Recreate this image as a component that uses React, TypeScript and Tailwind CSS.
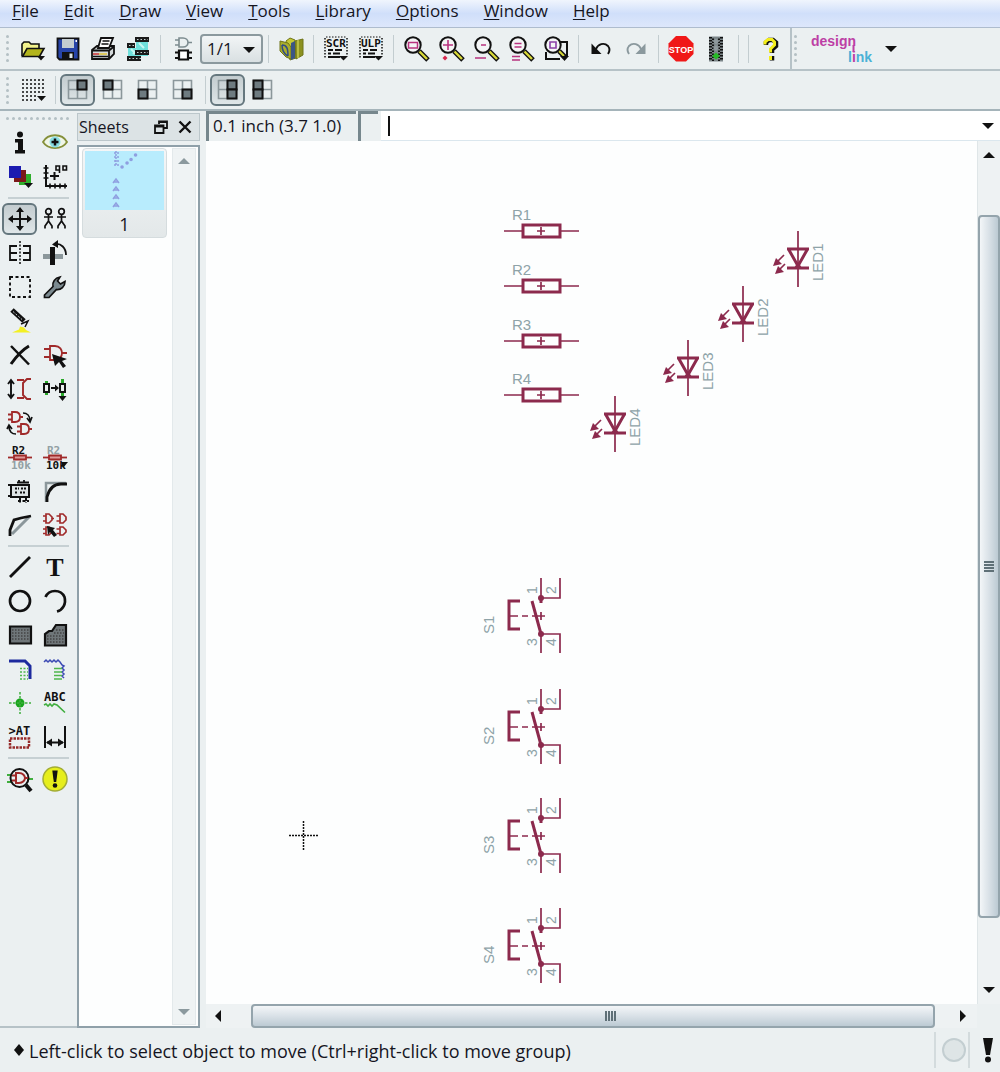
import { useState } from 'react';
import type { ReactNode } from 'react';
import clsx from 'clsx';

const MAROON = '#8c2a4d';
const LABEL = '#8ea3a8';

function Icon({ children, size = 26 }: { children: ReactNode; size?: number }) {
  return (
    <svg width={size} height={size} viewBox="0 0 26 26" fill="none" stroke="#111" strokeWidth="2" className="overflow-visible" aria-hidden="true">
      {children}
    </svg>
  );
}

function Glyphs({ x, y, size, fill = '#111', children }: { x: number; y: number; size: number; fill?: string; children: string }) {
  return (
    <text x={x} y={y} fontSize={size} fill={fill} stroke="none" fontFamily="'DejaVu Sans Mono', monospace" fontWeight="700">
      {children}
    </text>
  );
}

/* ---------- toolbar icons ---------- */

const OpenIcon = () => (
  <Icon>
    <path d="M2 20V8l2-2h5l2 2h8v4" fill="#f2f28c" strokeWidth="1.6" />
    <path d="M2.500 20.500L7 12.500h17l-4.500 8z" fill="#b3b51c" strokeWidth="1.600" />
    <path d="M17 20h8l-4 4.500z" fill="#111" stroke="none" />
  </Icon>
);

const SaveIcon = () => (
  <Icon>
    <path d="M2.500 2.500h21v21h-19l-2-2z" fill="#2744a8" strokeWidth="1.800" />
    <path d="M7 3h12v9H7z" fill="#c3ccd0" stroke="none" />
    <path d="M7 16h12v7H7z" fill="#111" stroke="none" />
    <path d="M14.500 17.500h3v4.500h-3z" fill="#dfe6e8" stroke="none" />
    <path d="M20.500 5h1.500" stroke="#fff" />
  </Icon>
);

const PrintIcon = () => (
  <Icon>
    <path d="M2 14l5-4h17v8l-5 5H2z" fill="#d5dadb" strokeWidth="1.800" />
    <path d="M8 12l3-10h12l-4 10z" fill="#fff" strokeWidth="1.800" />
    <path d="M12.500 5h7M11.500 8h7" strokeWidth="1.400" />
    <path d="M2 14.500h17l5-4M19 15v8" strokeWidth="1.800" />
    <path d="M3 18h6" stroke="#c33" strokeWidth="1.500" />
    <path d="M9 18h8" stroke="#e0c437" strokeWidth="1.500" />
    <path d="M3 20.500h15" strokeWidth="1.500" />
  </Icon>
);

const BoardIcon = () => (
  <Icon>
    <path d="M3 12h8V6h12v14H3z" fill="#6fe0dc" stroke="none" />
    <path d="M6 13l5 5M14 7l5 5M8 18l4-4" stroke="#c7f8f4" strokeWidth="2" />
    <path d="M10 1h14v5H10zM2 7h8v5H2zM10 14h14v5H10zM2 20h14v5H2z" fill="#1a1a1a" stroke="none" />
    <path d="M12 3.500h11M4 9.500h6M12 16.500h11M4 22.500h12" stroke="#c5d3d3" strokeWidth="1.200" strokeDasharray="1.500 2" />
  </Icon>
);

const GateChipIcon = () => (
  <Icon>
    <path d="M9 2h4c3 0 5 2 5 4.500s-2 4.500-5 4.500H9zM5 4h4M5 9h4M18 6.500h4" stroke="#7d8c90" strokeWidth="1.600" />
    <path d="M9 14.500h9v9H9z" strokeWidth="2.200" fill="#fff" />
    <path d="M5 16.500h4M5 22h4M18 16.500h4M18 22h4" strokeWidth="2" />
  </Icon>
);

const LibraryIcon = () => (
  <Icon>
    <path d="M8 5l4-3 5 2 1 18-6 2z" fill="#c5c934" stroke="#6f7418" strokeWidth="1" />
    <path d="M17 5l8-2v16l-7 4z" fill="#8c9120" stroke="#6f7418" strokeWidth="1" />
    <path d="M2 5l8 2 3 4v12l-5-2-6-6z" fill="#a9ad2c" stroke="#6f7418" strokeWidth="1" />
    <path d="M13 7l4-2v17l-4 2z" fill="#3c5684" stroke="none" />
    <path d="M4 9c5 0 6 4 6 11M4 9c0 5 2 9 6 11" stroke="#304b85" strokeWidth="1.500" />
    <path d="M20 4v18" stroke="#d9dc5a" strokeWidth="1.200" />
  </Icon>
);

function ScriptIcon({ label }: { label: string }) {
  return (
    <Icon>
      <path d="M2 2v20M24 2v17" strokeDasharray="1.500 1.500" strokeWidth="1.500" />
      <path d="M3 1h20" strokeDasharray="1.500 1.500" strokeWidth="1" />
      <Glyphs x={3} y={11} size={11}>{label}</Glyphs>
      <path d="M5 14h5M12 14h7M5 17.500h3M10 17.500h7M5 21h12" strokeWidth="1.800" />
      <path d="M16 20h9l-4.500 4.500z" fill="#111" stroke="none" />
    </Icon>
  );
}

function Magnifier({ children }: { children: ReactNode }) {
  return (
    <Icon>
      <path d="M16 15l9 9" strokeWidth="5" />
      <path d="M16.500 15.500l7.500 7.500" stroke="#d8d838" strokeWidth="2.400" />
      <circle cx="10" cy="9" r="7.700" fill="#f4f5f6" strokeWidth="2" />
      {children}
    </Icon>
  );
}

const ZoomFitIcon = () => (
  <Magnifier>
    <path d="M5.500 6.500h9v5.500h-9z" stroke="#b8337f" strokeWidth="1.500" />
  </Magnifier>
);
const ZoomInIcon = () => (
  <Magnifier>
    <path d="M5 9h10M10 4v10" stroke="#b8337f" strokeWidth="1.600" />
    <path d="M7 19.500l2.500 2.500L7 24.500 4.500 22z" fill="#d8274f" stroke="none" />
  </Magnifier>
);
const ZoomOutIcon = () => (
  <Magnifier>
    <path d="M8 9h5M2 22h11" stroke="#b8337f" strokeWidth="1.600" />
  </Magnifier>
);
const ZoomRedrawIcon = () => (
  <Magnifier>
    <path d="M6.500 7.500h7M6.500 11h7M4 20.500h8M4 24h8" stroke="#b8337f" strokeWidth="1.500" />
  </Magnifier>
);
const ZoomSelectIcon = () => (
  <Icon>
    <path d="M17 6h7v14M3 16v7h14" strokeWidth="2" />
    <path d="M16 15l6 6" strokeWidth="5" />
    <path d="M16 15l5 5" stroke="#d8d838" strokeWidth="2" />
    <circle cx="10" cy="9" r="7.700" fill="#f4f5f6" />
    <path d="M7 6h6v6H7z" stroke="#8a3fa8" strokeWidth="1.600" />
    <path d="M17 20h9l-4.500 5z" fill="#111" stroke="none" />
  </Icon>
);

const UndoIcon = ({ color = '#111', flip = false }: { color?: string; flip?: boolean }) => (
  <Icon>
    <g transform={flip ? 'translate(26 0) scale(-1 1)' : undefined}>
      <path d="M8 13c2-5 8-7 12-3 2 2.500 2 5 0 8" stroke={color} strokeWidth="1.900" />
      <path d="M3.500 7.500v10.500h10z" fill={color} stroke="none" />
    </g>
  </Icon>
);

const StopIcon = () => (
  <Icon>
    <path d="M8 0h10l7.500 7.500v10.500L18 25.500H8L.5 18V7.500z" fill="#f01818" stroke="none" />
    <text x="13" y="16.500" fontSize="9" fontWeight="700" textAnchor="middle" fill="#fff" stroke="none" fontFamily="'Liberation Sans', sans-serif">
      STOP
    </text>
  </Icon>
);

const GoIcon = () => (
  <Icon>
    <path d="M6 .5h14v25H6z" fill="#7b8588" stroke="none" />
    <path d="M7.500 1v24M18.500 1v24" strokeDasharray="1.500 1.500" strokeWidth="3" />
    <path d="M10 1v24M16 1v24" strokeDasharray="1.500 1.500" strokeDashoffset="1.500" strokeWidth="2" />
    <path d="M13 2.500l3 3-3 3-3-3zM13 9l3 3-3 3-3-3z" fill="#8f9a9e" stroke="none" />
    <path d="M13 16.500l4 3.500-4 3.500-4-3.500z" fill="#28b828" stroke="none" />
  </Icon>
);

const HelpIcon = () => (
  <Icon>
    <path d="M8 9V6.500l3-2.500h4l3 2.500v3.500l-4 3.500v3.500M14 20v4.500" stroke="#111" strokeWidth="4.500" />
    <path d="M7 8.500V6L10 3.500h4l2.500 2.500v3l-4 4v3.500M12.500 20v4" stroke="#f4ee1c" strokeWidth="3" />
  </Icon>
);

const GridIcon = () => (
  <Icon>
    <path d="M2 3h22M2 7h22M2 11h22M2 15h22M2 19h15M2 23h15" strokeDasharray="2 2" strokeWidth="1.600" />
    <path d="M17 19h9l-4.500 5z" fill="#111" stroke="none" />
  </Icon>
);

function PaneIcon({ cells }: { cells: [number, number][] }) {
  return (
    <Icon>
      <path d="M3.500 3.500h18v18h-18zM12.500 3.500v18M3.500 12.500h18" stroke="#8b979b" strokeWidth="1.600" />
      {cells.map(([cx, cy]) => (
        <rect key={`${cx}${cy}`} x={3.500 + cx * 9} y={3.500 + cy * 9} width="9" height="9" fill="#6e7b80" strokeWidth="2" />
      ))}
    </Icon>
  );
}

/* ---------- palette icons ---------- */

const InfoIcon = () => (
  <Icon>
    <circle cx="13" cy="4.500" r="3" fill="#111" stroke="none" />
    <path d="M8 9h8v11h2v3.500H8V20h3v-7.500H8z" fill="#111" stroke="none" />
  </Icon>
);
const EyeIcon = () => (
  <Icon>
    <path d="M1 12C6 3 20 3 25 12 20 20 6 20 1 12z" stroke="#85903a" strokeWidth="1.800" fill="#f0f6e8" />
    <circle cx="13" cy="12" r="5.500" fill="#8adfe4" stroke="none" />
    <path d="M13 8.500v7M9.500 12h7" strokeWidth="2.500" />
  </Icon>
);
const LayersIcon = () => (
  <Icon>
    <path d="M12 10h12v11H12z" fill="#2fae2c" stroke="none" />
    <path d="M7 6h12v12H7z" fill="#7a1919" stroke="none" />
    <path d="M2 2h12v12H2z" fill="#1b1bb0" stroke="none" />
    <path d="M17 19h9l-4.500 5z" fill="#111" stroke="none" />
  </Icon>
);
const MarkIcon = () => (
  <Icon>
    <path d="M4 1v21h21" strokeWidth="2" />
    <path d="M1.500 4h5M1.500 9h5M1.500 14h5M8 19.500v5M13 19.500v5M18 19.500v5M23 19.500v5" strokeWidth="1.600" />
    <path d="M8 12h9M12.500 8v8" />
    <path d="M14 2h3.500v4H14zM17.500 2v7M21 2h3.500v4H21z" strokeWidth="1.600" />
  </Icon>
);
const MoveIcon = () => (
  <Icon>
    <path d="M13 4v18M4 13h18" />
    <path d="M13 1l4 5H9zM13 25l4-5H9zM1 13l5-4v8zM25 13l-5-4v8z" fill="#111" stroke="none" />
  </Icon>
);
const CopyIcon = () => (
  <Icon>
    {[6.500, 19.500].map((x) => (
      <g key={x} strokeWidth="1.700">
        <circle cx={x} cy="5.500" r="2.800" />
        <path d={`M${x} 8.500v7.500M${x - 4.500} 11h9M${x} 15l-3.500 5v2.500M${x} 15l3.500 5v2.500`} />
      </g>
    ))}
  </Icon>
);
const MirrorIcon = () => (
  <Icon>
    <path d="M13 1v24" strokeDasharray="2 1.500" strokeWidth="1.500" />
    <path d="M10 6H3v14h7M3 13h7M16 6h7v14h-7M16 13h7" strokeWidth="1.800" />
  </Icon>
);
const RotateIcon = () => (
  <Icon>
    <path d="M1 16.500h20" stroke="#8b979b" strokeWidth="5" />
    <path d="M10.500 7v18" strokeWidth="5" />
    <path d="M13 4c6-1 11 4 11 11" strokeWidth="1.800" />
    <path d="M10 4.500L16 0v8z" fill="#111" stroke="none" />
  </Icon>
);
const GroupIcon = () => (
  <Icon>
    <path d="M3 3h20v20H3z" strokeDasharray="3 2.500" strokeWidth="1.900" />
  </Icon>
);
const WrenchIcon = () => (
  <Icon>
    <path d="M2.500 21l8.500-8.500c-1-4.500 2-8.500 7-9.500l-2.500 4 3 3 4.500-2.500c0 5-4 8.500-8.500 8l-7.500 8H2.500z" fill="#7b8a90" strokeWidth="1.700" />
  </Icon>
);
const PaintIcon = () => (
  <Icon>
    <path d="M5 2l12 11" strokeWidth="5" />
    <path d="M6 3.500l9 8" stroke="#c9d0d2" strokeWidth="1" strokeDasharray="2 1.500" />
    <path d="M14 16l7-3-3 6" strokeWidth="1.500" />
    <path d="M5 24.500l7-3 1-3 4 1 2 2.500 5 2.500z" fill="#f3f023" stroke="none" />
  </Icon>
);
const DeleteIcon = () => (
  <Icon>
    <path d="M4 4l18 18.500" strokeWidth="2.500" />
    <path d="M22 4C15 8 9 15 4 22" strokeWidth="3" />
  </Icon>
);
const AddIcon = () => (
  <Icon>
    <path d="M8 4h5c5 0 7 4 7 7s-2 7-7 7H8zM2 7h6M2 15h6M20 11h5" stroke="#a02a2a" strokeWidth="1.800" />
    <path d="M10 12l15 5-5 2 4 5-3 2-4-6-4 4z" fill="#111" stroke="none" />
  </Icon>
);
const PinSwapIcon = () => (
  <Icon>
    <path d="M4 5v16M1 8l3-4 3 4M1 18l3 4 3-4" strokeWidth="1.900" />
    <path d="M10 4h7M10 22h7M24 3h-4l-4 4v12l4 4h4" stroke="#a02a2a" strokeWidth="1.900" />
  </Icon>
);
const ReplaceIcon = () => (
  <Icon>
    <path d="M4.500 5v14M20.500 3v18" stroke="#28a828" strokeWidth="3" />
    <path d="M2 8h5v8H2zM18 8h5v8h-5z" fill="#ebefef" />
    <path d="M9 12h5" />
    <path d="M13 8.500l4 3.500-4 3.500zM16.500 20h8l-4 5z" fill="#111" stroke="none" />
  </Icon>
);
const GateSwapIcon = () => (
  <Icon>
    <path d="M5 2h3c4 0 5 3 5 5s-1 5-5 5H5zM1 4.500h4M1 9.500h4M13 7h3M14 14h3c4 0 5 3 5 5s-1 5-5 5h-3zM10 16.500h4M10 21.500h4M22 19h3" stroke="#a02a2a" strokeWidth="1.800" />
    <path d="M16 3c4 0 7 3 7 8M20 8l3 4 2-5M9 24c-4 0-7-2-7-8M0 19l2-4 3 4" strokeWidth="1.700" />
  </Icon>
);

function NameValueIcon({ value }: { value?: boolean }) {
  return (
    <Icon>
      <Glyphs x={5} y={10} size={11} fill={value ? '#92a0a4' : '#111'}>R2</Glyphs>
      <path d="M1 13.500h24" stroke="#a02a2a" strokeWidth="1.800" />
      <path d="M7 11.500h12v4H7z" fill="#d99" stroke="#a02a2a" strokeWidth="1.800" />
      <Glyphs x={4} y={25} size={11} fill={value ? '#111' : '#92a0a4'}>10k</Glyphs>
      {value && <path d="M19 18h7l-5 6z" fill="#111" stroke="none" />}
    </Icon>
  );
}
const SmashIcon = () => (
  <Icon>
    <path d="M4 7h18v12H4z" strokeWidth="2" fill="#dde3e4" />
    <path d="M1 7h6M1 18h4M10 4.500h12M12 2v3M17 2v3" strokeWidth="1.800" />
    <path d="M8 10.500h4M14 10.500h5M8 14.500h3M13 14.500h6" strokeDasharray="2 1" strokeWidth="2" />
    <path d="M11 23h11M13 20v5M19 20v5" strokeDasharray="3 1.500" />
  </Icon>
);
const MiterIcon = () => (
  <Icon>
    <path d="M4 24V5h20" stroke="#8b979b" strokeWidth="2.500" />
    <path d="M5 24v-5C7 11 12 6 19 6h6" strokeWidth="2.800" />
  </Icon>
);
const SplitIcon = () => (
  <Icon>
    <path d="M5 22L22 5" stroke="#8b979b" strokeWidth="3" />
    <path d="M3 24v-6l4-10 7-2 10-2" strokeWidth="2.800" />
  </Icon>
);
const InvokeIcon = () => (
  <Icon>
    <path d="M4 2h3l3 3v3l-3 3H4zM1 4h3M1 9h3M10 6.500h2M18 2h3l3 3v3l-3 3h-3zM14.500 4H18M14.500 9H18M18 15h3l3 3v2l-3 3h-3zM14.500 17H18M14.500 21.500H18M4 15h3l3 3v2l-3 3H4zM1 17h3M1 21.500h3" stroke="#a02a2a" strokeWidth="1.700" />
    <path d="M5 14l8 2-2 2 4 5-3 2-4-5-2 3z" fill="#111" stroke="none" />
  </Icon>
);
const WireIcon = () => (
  <Icon>
    <path d="M3 23L23 3" strokeWidth="2.800" />
  </Icon>
);
const TextIcon = () => (
  <Icon>
    <text x="13" y="22" fontSize="26" fontWeight="700" textAnchor="middle" fill="#111" stroke="none" fontFamily="'Liberation Serif', serif">
      T
    </text>
  </Icon>
);
const CircleIcon = () => (
  <Icon>
    <circle cx="13" cy="13" r="10" strokeWidth="2.700" />
  </Icon>
);
const ArcIcon = () => (
  <Icon>
    <path d="M3.500 9C7 1 19 1 22.500 9c2 7-2 13-7.500 14.500" strokeWidth="2.700" />
  </Icon>
);
const RectIcon = () => (
  <Icon>
    <path d="M3 4.500h21v17H3z" fill="#6f7679" strokeWidth="2.200" />
    <path d="M5 8h17M5 11h17M5 14h17M5 17h17" stroke="#444" strokeDasharray="1.500 1.500" strokeWidth="1.500" />
  </Icon>
);
const PolygonIcon = () => (
  <Icon>
    <path d="M3 23.500V12l4-3h3l4-6h10v20.500z" fill="#6f7679" strokeWidth="2.200" />
    <path d="M5 14h17M5 17h17M5 20h17M14 8h8M12 11h10" stroke="#444" strokeDasharray="1.500 1.500" strokeWidth="1.500" />
  </Icon>
);
const BusIcon = () => (
  <Icon>
    <path d="M2 5h16l5 5v13" stroke="#1d2a9e" strokeWidth="3" />
    <path d="M13 12.500h8M13 16h8M13 19.500h8M13 23h8" stroke="#4fb64c" strokeDasharray="2 1.500" strokeWidth="1.600" />
  </Icon>
);
const NetIcon = () => (
  <Icon>
    <path d="M2 6l2-2 2 2 2-2 2 2 2-2 2 2 2-2 2 2 2 3 2 1-2 2 2 2-2 2 2 2-2 2 2 2" stroke="#3c4ab4" strokeWidth="1.500" />
    <path d="M12 12.500h8M12 16h8M12 19.500h8M12 23h8" stroke="#4fb64c" strokeWidth="1.700" />
  </Icon>
);
const JunctionIcon = () => (
  <Icon>
    <circle cx="13" cy="13" r="4.500" fill="#18a51c" stroke="none" />
    <path d="M13 2v22M2 13h22" stroke="#3fae3e" strokeDasharray="2.500 1.500" strokeWidth="1.500" />
  </Icon>
);
const LabelIcon = () => (
  <Icon>
    <Glyphs x={2} y={11} size={12}>ABC</Glyphs>
    <path d="M2 15l2-1 2 2 2-2 2 2 2-2 3 1 8 7.500" stroke="#3fae3e" strokeWidth="1.600" />
  </Icon>
);
const AttributeIcon = () => (
  <Icon>
    <Glyphs x={1.500} y={11} size={12}>{'>AT'}</Glyphs>
    <path d="M3 14.500h19v9H3z" stroke="#962a2a" strokeDasharray="2.500 1" strokeWidth="2.500" />
  </Icon>
);
const DimensionIcon = () => (
  <Icon>
    <path d="M3 2v22M23 2v22M5 18.500h16" />
    <path d="M4 18.500l6-4v8zM22 18.500l-6-4v8z" fill="#111" stroke="none" />
  </Icon>
);
const ErcIcon = () => (
  <Icon>
    <path d="M0 9h5M0 16h5M20 13h6" stroke="#3fae3e" strokeWidth="1.800" />
    <circle cx="12.500" cy="12" r="9" strokeWidth="2" />
    <path d="M9 7h3c4 0 6 3 6 5s-2 5-6 5H9zM5 9.500h4M5 14.500h4M18 12h3" stroke="#a02a2a" strokeWidth="2" />
    <path d="M19 19l5 6" strokeWidth="4" />
  </Icon>
);
const ErrorsIcon = () => (
  <Icon>
    <circle cx="13" cy="13" r="12" fill="#e6ee1c" stroke="#a3ad35" strokeWidth="1.500" />
    <path d="M10.300 4.500h5.400l-1.500 11.500h-2.400z" fill="#111" stroke="none" />
    <circle cx="13" cy="19.500" r="2.300" fill="#111" stroke="none" />
  </Icon>
);

/* ---------- controls ---------- */

type Tool = { name: string; icon: ReactNode };

function ToolButton({ name, icon, pressed, onClick }: Tool & { pressed?: boolean; onClick?: () => void }) {
  return (
    <button
      type="button"
      aria-label={name}
      title={name}
      onClick={onClick}
      className={clsx(
        'flex w-[35px] shrink-0 items-center justify-center',
        pressed
          ? 'h-8 rounded-md border-2 border-[#65777e] bg-gradient-to-b from-[#c3cccf] to-[#dfe6e8]'
          : 'h-[34px]'
      )}
    >
      {icon}
    </button>
  );
}

const Separator = () => (
  <div className="flex h-7 w-[10px] shrink-0 justify-center">
    <div className="w-px bg-[#c3cdd0]" />
  </div>
);

const Grip = () => (
  <div className="flex w-[9px] shrink-0 flex-col gap-[3px]">
    {[0, 1, 2, 3, 4].map((i) => (
      <span key={i} className="size-[3px] rounded-full bg-[#b4c0c4]" />
    ))}
  </div>
);

const Caret = ({ dir = 'down', color = '#111' }: { dir?: 'up' | 'down' | 'left' | 'right'; color?: string }) => {
  const paths = { down: 'M0 3h12l-6 6z', up: 'M0 9h12L6 3z', left: 'M9 0v12L3 6z', right: 'M3 0v12l6-6z' };
  return (
    <svg width="12" height="12" viewBox="0 0 12 12" fill={color} aria-hidden="true">
      <path d={paths[dir]} />
    </svg>
  );
};

const menus = ['File', 'Edit', 'Draw', 'View', 'Tools', 'Library', 'Options', 'Window', 'Help'];

const fileTools: Tool[] = [
  { name: 'Open', icon: <OpenIcon /> },
  { name: 'Save', icon: <SaveIcon /> },
  { name: 'Print', icon: <PrintIcon /> },
  { name: 'CAM Processor', icon: <BoardIcon /> },
];
const zoomTools: Tool[] = [
  { name: 'Zoom to fit', icon: <ZoomFitIcon /> },
  { name: 'Zoom in', icon: <ZoomInIcon /> },
  { name: 'Zoom out', icon: <ZoomOutIcon /> },
  { name: 'Redraw', icon: <ZoomRedrawIcon /> },
  { name: 'Zoom select', icon: <ZoomSelectIcon /> },
];

const paletteGroups: (Tool | null)[][] = [
  [
    { name: 'Info', icon: <InfoIcon /> },
    { name: 'Show', icon: <EyeIcon /> },
    { name: 'Display', icon: <LayersIcon /> },
    { name: 'Mark', icon: <MarkIcon /> },
  ],
  [
    { name: 'Move', icon: <MoveIcon /> },
    { name: 'Copy', icon: <CopyIcon /> },
    { name: 'Mirror', icon: <MirrorIcon /> },
    { name: 'Rotate', icon: <RotateIcon /> },
    { name: 'Group', icon: <GroupIcon /> },
    { name: 'Change', icon: <WrenchIcon /> },
    { name: 'Paste', icon: <PaintIcon /> },
    null,
    { name: 'Delete', icon: <DeleteIcon /> },
    { name: 'Add', icon: <AddIcon /> },
    { name: 'Pinswap', icon: <PinSwapIcon /> },
    { name: 'Replace', icon: <ReplaceIcon /> },
    { name: 'Gateswap', icon: <GateSwapIcon /> },
    null,
    { name: 'Name', icon: <NameValueIcon /> },
    { name: 'Value', icon: <NameValueIcon value /> },
    { name: 'Smash', icon: <SmashIcon /> },
    { name: 'Miter', icon: <MiterIcon /> },
    { name: 'Split', icon: <SplitIcon /> },
    { name: 'Invoke', icon: <InvokeIcon /> },
  ],
  [
    { name: 'Wire', icon: <WireIcon /> },
    { name: 'Text', icon: <TextIcon /> },
    { name: 'Circle', icon: <CircleIcon /> },
    { name: 'Arc', icon: <ArcIcon /> },
    { name: 'Rect', icon: <RectIcon /> },
    { name: 'Polygon', icon: <PolygonIcon /> },
    { name: 'Bus', icon: <BusIcon /> },
    { name: 'Net', icon: <NetIcon /> },
    { name: 'Junction', icon: <JunctionIcon /> },
    { name: 'Label', icon: <LabelIcon /> },
    { name: 'Attribute', icon: <AttributeIcon /> },
    { name: 'Dimension', icon: <DimensionIcon /> },
  ],
  [
    { name: 'Erc', icon: <ErcIcon /> },
    { name: 'Errors', icon: <ErrorsIcon /> },
  ],
];

/* ---------- schematic ---------- */

const resistors = [90, 145, 200, 254];
const leds = [
  { x: 592, y: 118 },
  { x: 537, y: 173 },
  { x: 482, y: 227 },
  { x: 409, y: 283 },
];
const switches = [475, 586, 695, 805];

function Resistor({ x, y, name }: { x: number; y: number; name: string }) {
  return (
    <g transform={`translate(${x} ${y})`}>
      <path d="M-37 0h19M20 0h18M-4 0h8M0-4v8" strokeWidth="1.700" />
      <rect x="-18" y="-6" width="37" height="12" strokeWidth="3" />
      <text x="-29" y="-11" fontSize="15" fill={LABEL} stroke="none">{name}</text>
    </g>
  );
}

function Led({ x, y, name }: { x: number; y: number; name: string }) {
  return (
    <g transform={`translate(${x} ${y})`}>
      <path d="M0-28v56M-14-4l-8 8M-13 5l-8 8" strokeWidth="1.700" />
      <path d="M-11-10h22M-9-9L0 7 9-9M-11 9h22" strokeWidth="3" />
      <path d="M-4 9L0 3l4 6z" fill={MAROON} stroke="none" />
      <path d="M-25 7l3-8 6 6zM-23 15l3-8 6 6z" fill={MAROON} stroke="none" />
      <text transform="translate(25 22) rotate(-90)" fontSize="15" fill={LABEL} stroke="none">{name}</text>
    </g>
  );
}

function PushButton({ x, y, name }: { x: number; y: number; name: string }) {
  return (
    <g transform={`translate(${x} ${y})`}>
      <path d="M-21-15h-11v28h11M-9-15L0 18" strokeWidth="3" />
      <path d="M0-38v20M0-18h19v-20M0 37V18M0 18h19v19M-32 0h9M-19 0h6M-9 0h13M0-4v8" strokeWidth="1.700" />
      <path d="M0-18v5" strokeWidth="3" />
      <circle cx="0" cy="-18" r="3" fill={MAROON} stroke="none" />
      <circle cx="0" cy="18" r="3" fill={MAROON} stroke="none" />
      <g fill={LABEL} stroke="none" fontSize="14">
        <text transform="translate(-4 -22) rotate(-90)">1</text>
        <text transform="translate(15 -22) rotate(-90)">2</text>
        <text transform="translate(-4 30) rotate(-90)">3</text>
        <text transform="translate(15 30) rotate(-90)">4</text>
        <text transform="translate(-47 18) rotate(-90)" fontSize="15">{name}</text>
      </g>
    </g>
  );
}

function Schematic() {
  return (
    <svg className="absolute inset-0 size-full" fill="none" stroke={MAROON} fontFamily="'Liberation Sans', Arial, sans-serif">
      {resistors.map((y, i) => (
        <Resistor key={y} x={335} y={y} name={`R${i + 1}`} />
      ))}
      {leds.map((led, i) => (
        <Led key={led.x} {...led} name={`LED${i + 1}`} />
      ))}
      {switches.map((y, i) => (
        <PushButton key={y} x={335} y={y} name={`S${i + 1}`} />
      ))}
      {/* cursor */}
      <path d="M83 694.500h29M97.500 680v29" stroke="#111" strokeWidth="1.500" strokeDasharray="2 1" />
    </svg>
  );
}

function App() {
  const [tool, setTool] = useState('Move');
  const [corner, setCorner] = useState(0);
  const [side, setSide] = useState(0);
  const [command, setCommand] = useState('');

  const corners: [number, number][] = [[1, 0], [0, 0], [0, 1], [1, 1]];
  const cornerNames = ['Top right', 'Top left', 'Bottom left', 'Bottom right'];

  return (
    <div className="flex min-h-screen flex-col bg-[#ebf0f1] font-['Open_Sans',sans-serif] text-[#15151f]">
      {/* Menu bar */}
      <nav className="flex h-7 items-start gap-[25px] border-b border-[#aebcce] bg-gradient-to-b from-[#f0f5fd] via-[#d0dffa] to-[#dde7fb] pl-3 text-[17px] leading-[22px]">
        {menus.map((menu) => (
          <button key={menu} type="button">
            <span className="underline underline-offset-2">{menu[0]}</span>
            {menu.slice(1)}
          </button>
        ))}
      </nav>

      {/* Action toolbar */}
      <div className="flex h-[43px] items-center border-b-2 border-[#b6c2c7] pl-[6px]">
        <Grip />
        {fileTools.map((t) => (
          <ToolButton key={t.name} {...t} />
        ))}
        <Separator />
        <ToolButton name="Board" icon={<GateChipIcon />} />
        <div className="relative">
          <select
            aria-label="Sheet"
            className="block h-[30px] w-[63px] appearance-none rounded border-2 border-[#8b999e] bg-gradient-to-b from-[#f2f5f6] to-[#d9e0e2] pl-[5px] text-[17px] leading-5"
          >
            <option>1/1</option>
          </select>
          <span className="pointer-events-none absolute top-[10px] right-2">
            <Caret />
          </span>
        </div>
        <Separator />
        <ToolButton name="Use library" icon={<LibraryIcon />} />
        <Separator />
        <ToolButton name="Run script" icon={<ScriptIcon label="SCR" />} />
        <ToolButton name="Run ULP" icon={<ScriptIcon label="ULP" />} />
        <Separator />
        {zoomTools.map((t) => (
          <ToolButton key={t.name} {...t} />
        ))}
        <Separator />
        <ToolButton name="Undo" icon={<UndoIcon />} />
        <ToolButton name="Redo" icon={<UndoIcon color="#8b999e" flip />} />
        <Separator />
        <ToolButton name="Stop" icon={<StopIcon />} />
        <ToolButton name="Go" icon={<GoIcon />} />
        <Separator />
        <Separator />
        <ToolButton name="Help" icon={<HelpIcon />} />
        <div className="ml-[2px] h-full w-1 border-l-2 border-[#b6c2c7]" />
        <Grip />
        <button type="button" aria-label="designlink" className="ml-[6px] flex items-center gap-3">
          <svg width="64" height="34" viewBox="0 0 64 34" fontFamily="'Liberation Sans', sans-serif" fontSize="14" fontWeight="700" aria-hidden="true">
            <text x="2" y="14" fill="#bd3fa5">design</text>
            <text x="39" y="30" fill="#4bb2d6">
              l<tspan fill="#bd3fa5">i</tspan>nk
            </text>
            <path d="M44.500 13v7" stroke="#bd3fa5" strokeWidth="2" />
          </svg>
          <Caret />
        </button>
      </div>

      {/* View toolbar */}
      <div className="flex h-10 items-center border-b-2 border-[#a5b4ba] pl-[6px]">
        <Grip />
        <ToolButton name="Grid" icon={<GridIcon />} />
        <Separator />
        {corners.map((cell, i) => (
          <ToolButton
            key={cornerNames[i]}
            name={cornerNames[i]}
            icon={<PaneIcon cells={[cell]} />}
            pressed={corner === i}
            onClick={() => setCorner(i)}
          />
        ))}
        <Separator />
        <ToolButton name="Right side" icon={<PaneIcon cells={[[1, 0], [1, 1]]} />} pressed={side === 0} onClick={() => setSide(0)} />
        <ToolButton name="Left side" icon={<PaneIcon cells={[[0, 0], [0, 1]]} />} pressed={side === 1} onClick={() => setSide(1)} />
      </div>

      <div className="flex flex-1">
        {/* Tool palette */}
        <aside className="w-[77px] shrink-0 border-b-2 border-[#b6c2c7] pt-[6px] pl-[2px]">
          <div className="mb-[6px] flex justify-center gap-[3px] pr-1">
            {Array.from({ length: 11 }, (_, i) => (
              <span key={i} className="size-[3px] rounded-full bg-[#b4c0c4]" />
            ))}
          </div>
          {paletteGroups.map((group, g) => (
            <div key={g}>
              {g > 0 && (
                <div className="flex h-2 items-center pr-2 pl-[6px]">
                  <div className="h-[2px] w-full bg-[#c6d0d3]" />
                </div>
              )}
              <div className="grid w-[70px] auto-rows-[34px] grid-cols-2 items-center">
                {group.map((t, i) =>
                  t ? <ToolButton key={t.name} {...t} pressed={tool === t.name} onClick={() => setTool(t.name)} /> : <span key={i} />
                )}
              </div>
            </div>
          ))}
        </aside>

        {/* Sheets panel */}
        <section className="flex w-[123px] shrink-0 flex-col pt-[2px]">
          <header className="mb-1 flex h-7 items-center border border-[#bcc7cb] bg-[#dce3e5] px-px text-base">
            <h2 className="flex-1">Sheets</h2>
            <button type="button" aria-label="Float" className="mr-[10px]">
              <svg width="14" height="14" viewBox="0 0 14 14" fill="none" stroke="#111" strokeWidth="1.800">
                <path d="M5 4V1.500h8V8h-3M1 5.500h8.500V13H1zM1 6.500h8M5 2h8" />
              </svg>
            </button>
            <button type="button" aria-label="Close" className="mr-[6px]">
              <svg width="14" height="14" viewBox="0 0 14 14" stroke="#111" strokeWidth="2.400">
                <path d="M1.500 1.500l11 11M12.500 1.500l-11 11" />
              </svg>
            </button>
          </header>
          <div className="flex flex-1 justify-between border-2 border-[#8fa0a9] bg-[#fdfefe] py-px pr-[2px] pl-[3px]">
            <button type="button" className="flex h-[90px] w-[85px] flex-col rounded border border-[#d5dcde] bg-gradient-to-b from-[#f4f6f7] to-[#e3e8e9] p-[2px] text-center text-lg">
              <svg className="h-[59px] w-full shrink-0 bg-[#b8ecfd]" viewBox="0 0 79 59" fill="none" stroke="#8f9fe0" strokeWidth="1.500" aria-hidden="true">
                <path d="M29 2h5M29 6h5M29 10h5M29 14h5M31 0v15" strokeDasharray="2 1" />
                <path d="M37 16h.1M42 12h.1M46 8.500h.1M50.500 4h.1" strokeWidth="3.500" strokeLinecap="round" />
                <path d="M28 32l3-4 3 4M28 40l3-4 3 4M28 48l3-4 3 4M28 56l3-4 3 4M29 31h4M29 39h4M29 47h4M29 55h4" />
              </svg>
              <span className="w-full pt-[2px] leading-6">1</span>
            </button>
            <div className="flex w-6 flex-col items-center justify-between border border-[#e3e9eb] bg-[#eff3f4] py-[6px]">
              <Caret dir="up" color="#8b999e" />
              <Caret color="#8b999e" />
            </div>
          </div>
        </section>

        {/* Drawing area */}
        <main className="ml-[6px] flex min-w-0 flex-1 flex-col">
          <div className="flex h-[30px] text-[17px]">
            <output className="mr-[2px] w-[150px] border-t-[3px] border-l-[3px] border-[#76878d] pl-1 leading-6 whitespace-nowrap">0.1 inch (3.7 1.0)</output>
            <div className="mr-[3px] w-[20px] border-t-[3px] border-l-[3px] border-[#76878d]" />
            <div className="flex flex-1 items-center border-b border-[#dbe7ee] bg-white pr-[6px] pl-[7px]">
              <span className="h-5 w-[2px] bg-[#111]" />
              <input
                aria-label="Command"
                value={command}
                onChange={(e) => setCommand(e.target.value)}
                className="min-w-0 flex-1 bg-transparent pl-1 outline-none"
              />
              <Caret />
            </div>
          </div>
          <div className="flex flex-1">
            <div className="relative flex-1 bg-[#fdfefe]">
              <Schematic />
            </div>
            <div className="flex w-[23px] flex-col items-center border-l border-[#dfe6e8] bg-[#eef2f3] pt-2">
              <Caret dir="up" />
              <div className="flex-[54]" />
              <div className="flex w-full flex-[702] flex-col items-center justify-center gap-px rounded-sm border-2 border-[#94a4ac] bg-gradient-to-r from-[#f3f6f8] via-[#d9e1e7] to-[#bccad3]">
                {[0, 1, 2, 3].map((i) => (
                  <span key={i} className="h-[2px] w-[10px] bg-[#5f7077]" />
                ))}
              </div>
              <div className="flex-[66]" />
              <Caret />
              <div className="h-2" />
            </div>
          </div>
          <div className="mr-[23px] flex h-6 items-center bg-[#eef2f3] pl-[6px]">
            <Caret dir="left" />
            <div className="flex-[28]" />
            <div className="flex h-full flex-[681] items-center justify-center gap-px rounded-sm border-2 border-[#94a4ac] bg-gradient-to-b from-[#f3f6f8] via-[#d9e1e7] to-[#bccad3] pl-9">
              {[0, 1, 2, 3].map((i) => (
                <span key={i} className="h-[10px] w-[2px] bg-[#5f7077]" />
              ))}
            </div>
            <div className="flex-[23]" />
            <Caret dir="right" />
            <div className="w-2" />
          </div>
        </main>
      </div>

      {/* Status bar */}
      <footer className="flex h-11 items-center pl-[14px] text-lg">
        <svg width="10" height="12" viewBox="0 0 10 12" className="mr-[5px]" aria-hidden="true">
          <path d="M5 0l5 6-5 6-5-6z" fill="#111" />
        </svg>
        <p className="flex-1 pt-[2px]">Left-click to select object to move (Ctrl+right-click to move group)</p>
        <div className="flex h-9 w-9 items-center justify-center border-x-2 border-[#d3dbdd] pl-1">
          <span className="size-6 rounded-full border-2 border-[#c3ced1] bg-[#dee5e6]" />
        </div>
        <svg width="10" height="26" viewBox="0 0 10 26" className="mr-[7px] ml-[13px]" aria-hidden="true">
          <path d="M0 1h10L7 18H3z" fill="#111" />
          <circle cx="5" cy="22.500" r="3" fill="#111" />
        </svg>
      </footer>
    </div>
  );
}

export default App;
